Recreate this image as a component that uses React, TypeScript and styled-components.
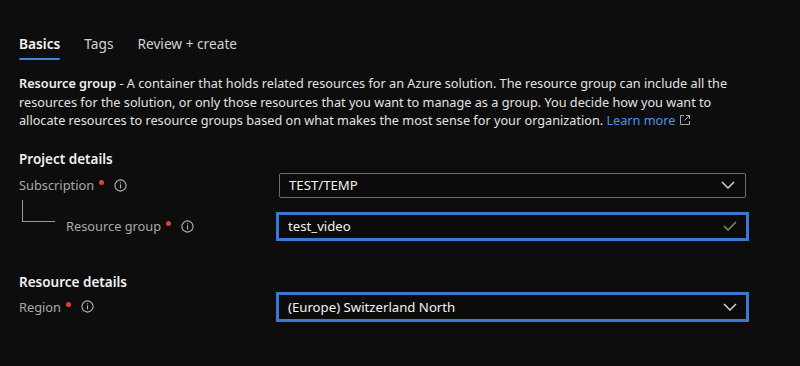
import React from 'react';
import styled, { createGlobalStyle } from 'styled-components';

const GlobalStyle = createGlobalStyle`
  html, body {
    margin: 0;
    padding: 0;
    background: #0e0d0e;
  }
  body {
    font-family: "Noto Sans", "Open Sans", sans-serif;
    color: #e8e8e8;
  }
`;

const Page = styled.div`
  width: 800px;
  height: 366px;
  padding: 30px 0 0 19px;
  box-sizing: border-box;
  background: #0e0d0e;
  overflow: hidden;
`;

const TabBar = styled.div`
  display: flex;
  gap: 24px;
  height: 30px;
`;

const Tab = styled.div<{ $active?: boolean }>`
  position: relative;
  font-size: 13.7px;
  line-height: 28px;
  font-weight: ${p => (p.$active ? 600 : 400)};
  color: ${p => (p.$active ? '#f4f4f4' : '#d2d2d2')};
  &::after {
    content: '';
    display: ${p => (p.$active ? 'block' : 'none')};
    position: absolute;
    left: 0;
    right: 0;
    bottom: 0;
    height: 2px;
    border-radius: 1px;
    background: #3d86d8;
  }
`;

const Description = styled.p`
  margin: 14px 0 0;
  font-size: 12.7px;
  line-height: 18.5px;
  color: #e2e2e2;
  white-space: nowrap;
  b {
    font-weight: 600;
    color: #f0f0f0;
  }
`;

const Link = styled.span`
  color: #4e93e2;
`;

const SectionTitle = styled.h2<{ $top: number }>`
  margin: ${p => p.$top}px 0 0;
  font-size: 13.5px;
  line-height: 18px;
  font-weight: 600;
  color: #f0f0f0;
`;

const FormRow = styled.div<{ $top: number }>`
  display: grid;
  grid-template-columns: 257px 473px;
  align-items: center;
  margin-top: ${p => p.$top}px;
`;

const LabelCell = styled.div`
  display: flex;
  align-items: center;
  font-size: 12.8px;
  color: #a9a9a9;
  height: 100%;
`;

const Connector = styled.span`
  align-self: flex-start;
  width: 33px;
  height: 22px;
  margin: -12px 11px 0 3px;
  border-left: 1px solid #9a9a9a;
  border-bottom: 1px solid #9a9a9a;
  box-sizing: border-box;
`;

const Required = styled.span`
  display: inline-block;
  width: 5px;
  height: 5px;
  margin-left: 5px;
  margin-top: -5px;
  border-radius: 50%;
  background: #d8453a;
`;

const InfoWrap = styled.span`
  display: inline-flex;
  margin-left: 10px;
`;

const Field = styled.div<{ $focused?: boolean }>`
  display: flex;
  align-items: center;
  justify-content: space-between;
  box-sizing: border-box;
  background: #0c0b0c;
  font-size: 13.2px;
  color: #f2f2f2;
  height: ${p => (p.$focused ? 29 : 25)}px;
  margin: ${p => (p.$focused ? '0' : '0 3px')};
  border: ${p => (p.$focused ? '3.5px solid #3a79d2' : '1px solid #6f6f6f')};
  border-radius: ${p => (p.$focused ? 0 : 2)}px;
  padding: ${p => (p.$focused ? '0 9px 0 9px' : '0 10px 0 9px')};
`;

const InfoIcon = () => (
  <svg width="13" height="13" viewBox="0 0 13 13">
    <circle cx="6.5" cy="6.5" r="5.6" fill="none" stroke="#b4b4b4" strokeWidth="1.1" />
    <rect x="6" y="5.4" width="1.1" height="4" fill="#b4b4b4" />
    <rect x="6" y="3.3" width="1.1" height="1.1" fill="#b4b4b4" />
  </svg>
);

const Chevron = () => (
  <svg width="14" height="8" viewBox="0 0 14 8">
    <polyline points="1,1 7,7 13,1" fill="none" stroke="#cfcfcf" strokeWidth="1.5" />
  </svg>
);

const Check = () => (
  <svg width="14" height="10" viewBox="0 0 14 10">
    <polyline points="1,5 5,9 13,1" fill="none" stroke="#6f9b4c" strokeWidth="1.5" />
  </svg>
);

const ExternalIcon = () => (
  <svg width="12" height="12" viewBox="0 0 12 12" style={{ marginLeft: 4, verticalAlign: -1 }}>
    <path d="M5 1.5H1.5v9h9V7" fill="none" stroke="#a9a9a9" strokeWidth="1" />
    <path d="M7 1.5h3.5V5M10.5 1.5L5.5 6.5" fill="none" stroke="#a9a9a9" strokeWidth="1" />
  </svg>
);

const Label: React.FC<{ text: string }> = ({ text }) => (
  <>
    {text}
    <Required />
    <InfoWrap>
      <InfoIcon />
    </InfoWrap>
  </>
);

const App: React.FC = () => {
  return (
    <>
      <GlobalStyle />
      <Page>
        <TabBar>
          <Tab $active>Basics</Tab>
          <Tab>Tags</Tab>
          <Tab>Review + create</Tab>
        </TabBar>
        <Description>
          <b>Resource group</b> - A container that holds related resources for an Azure solution. The resource group can include all the
          <br />
          resources for the solution, or only those resources that you want to manage as a group. You decide how you want to
          <br />
          allocate resources to resource groups based on what makes the most sense for your organization. <Link>Learn more</Link>
          <ExternalIcon />
        </Description>

        <SectionTitle $top={20}>Project details</SectionTitle>
        <FormRow $top={5}>
          <LabelCell>
            <Label text="Subscription" />
          </LabelCell>
          <Field>
            TEST/TEMP
            <Chevron />
          </Field>
        </FormRow>
        <FormRow $top={14}>
          <LabelCell>
            <Connector />
            <Label text="Resource group" />
          </LabelCell>
          <Field $focused>
            test_video
            <Check />
          </Field>
        </FormRow>

        <SectionTitle $top={32}>Resource details</SectionTitle>
        <FormRow $top={1}>
          <LabelCell>
            <Label text="Region" />
          </LabelCell>
          <Field $focused style={{ height: 30 }}>
            (Europe) Switzerland North
            <Chevron />
          </Field>
        </FormRow>
      </Page>
    </>
  );
};

export default App;
